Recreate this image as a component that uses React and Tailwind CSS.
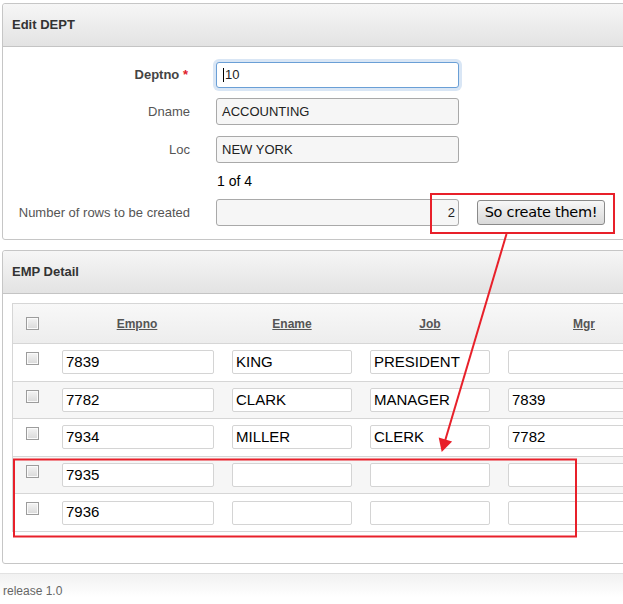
import React from "react";

const rows = [
  { empno: "7839", ename: "KING", job: "PRESIDENT", mgr: "" },
  { empno: "7782", ename: "CLARK", job: "MANAGER", mgr: "7839" },
  { empno: "7934", ename: "MILLER", job: "CLERK", mgr: "7782" },
  { empno: "7935", ename: "", job: "", mgr: "" },
  { empno: "7936", ename: "", job: "", mgr: "" },
];

const Checkbox = () => (
  <span className="block w-[13px] h-[13px] border border-[#9c9c9c] bg-gradient-to-b from-[#f4f4f4] to-[#d9d9d9] shadow-[inset_0_0_0_1px_#fafafa]" />
);

const PanelHeader = ({ children }) => (
  <div className="h-[43px] flex items-center px-[9px] bg-gradient-to-b from-[#f6f6f6] to-[#e3e3e3] border-b border-[#c4c4c4] text-[13px] font-bold text-[#333] rounded-t-[3px]">
    {children}
  </div>
);

const FormRow = ({ label, required, className = "", children }) => (
  <div className={`flex items-center ${className}`}>
    <div className="w-[187px] text-right text-[13px] text-[#555]">
      {required ? (
        <span className="font-bold text-[#444] pr-[2px]">
          {label} <span className="text-[#e0202a]">*</span>
        </span>
      ) : (
        label
      )}
    </div>
    <div className="ml-[26px] flex items-center">{children}</div>
  </div>
);

const ReadField = ({ value, right }) => (
  <div
    className={`w-[243px] h-[27px] flex items-center px-[5px] bg-[#f6f6f6] border border-[#a9a9a9] rounded-[3px] text-[13px] text-[#222] ${
      right ? "justify-end pr-[3px]" : ""
    }`}
  >
    {value}
  </div>
);

const Cell = ({ value }) => (
  <div className="h-[24px] flex items-center px-[3px] bg-white border border-[#d4d4d4] rounded-[2px] text-[15px] text-black">
    {value}
  </div>
);

export default function App() {
  return (
    <div className="relative w-[623px] h-[604px] overflow-hidden bg-white font-['Liberation_Sans',Arial,sans-serif]">
      <div className="pt-[3px] pl-[2px]">
        {/* Edit DEPT */}
        <section className="w-[680px] border border-[#c6c6c6] rounded-[3px]">
          <PanelHeader>Edit DEPT</PanelHeader>
          <div className="pt-[15px] pb-[13px] flex flex-col gap-[10px]">
            <FormRow label="Deptno" required>
              <div className="w-[243px] h-[26px] flex items-center px-[6px] bg-white border border-[#6a9fd6] rounded-[3px] shadow-[0_0_0_3px_#d9e6f5] text-[13px] text-[#222]">
                <span className="w-px h-[14px] bg-black mr-px" />
                10
              </div>
            </FormRow>
            <FormRow label="Dname">
              <ReadField value="ACCOUNTING" />
            </FormRow>
            <FormRow label="Loc" className="mt-px">
              <ReadField value="NEW YORK" />
            </FormRow>
            <div className="h-[16px] flex items-center pl-[214px] text-[14px] text-black">
              1 of 4
            </div>
            <FormRow label="Number of rows to be created">
              <ReadField value="2" right />
              <button className="ml-[18px] w-[128px] h-[25px] flex items-center justify-center bg-gradient-to-b from-[#f7f7f7] to-[#d9d9d9] border border-[#8a8a8a] rounded-[3px] text-[14.5px] text-black font-['DejaVu_Sans',sans-serif] tracking-[-0.3px]">
                So create them!
              </button>
            </FormRow>
          </div>
        </section>

        {/* EMP Detail */}
        <section className="mt-[10px] w-[680px] border border-[#c6c6c6] rounded-[3px]">
          <PanelHeader>EMP Detail</PanelHeader>
          <div className="pt-[9px] pl-[9px] pb-[31px]">
            <div className="border-l border-t border-b border-[#d6d6d6]">
              <div className="h-[39px] flex items-center bg-gradient-to-b from-[#f8f8f8] to-[#ededed] text-[12px] font-bold text-[#555]">
                <div className="w-[38px] pl-[13px]">
                  <Checkbox />
                </div>
                <div className="w-[172px] text-center underline">Empno</div>
                <div className="w-[138px] text-center underline">Ename</div>
                <div className="w-[138px] text-center underline">Job</div>
                <div className="w-[170px] text-center underline">Mgr</div>
              </div>
              {rows.map((r, i) => (
                <div
                  key={r.empno}
                  className={`h-[37.6px] flex items-center border-t border-[#d6d6d6] ${
                    i % 2 === 1 ? "bg-[#f6f6f6]" : "bg-white"
                  }`}
                >
                  <div className="w-[38px] pl-[13px] self-start pt-[8px]">
                    <Checkbox />
                  </div>
                  <div className="w-[172px] pl-[11px] pr-[9px]">
                    <Cell value={r.empno} />
                  </div>
                  <div className="w-[138px] px-[9px]">
                    <Cell value={r.ename} />
                  </div>
                  <div className="w-[138px] px-[9px]">
                    <Cell value={r.job} />
                  </div>
                  <div className="w-[170px] pl-[9px]">
                    <Cell value={r.mgr} />
                  </div>
                </div>
              ))}
            </div>
          </div>
        </section>
      </div>

      <div className="mt-[9px] h-[40px] border-t border-[#e2e2e2] bg-gradient-to-b from-[#f1f1f1] to-white to-60% pt-[8px] pl-[3px] text-[12px] text-[#666]">
        release 1.0
      </div>

      {/* annotation overlay */}
      <svg
        className="absolute left-0 top-0 pointer-events-none"
        width="623"
        height="604"
        viewBox="0 0 623 604"
      >
        <rect x="431" y="194" width="183" height="39" fill="none" stroke="#e8202a" strokeWidth="2" />
        <rect x="14" y="459.5" width="562" height="77" fill="none" stroke="#e8202a" strokeWidth="2" />
        <line x1="506.5" y1="234" x2="445" y2="441" stroke="#e8202a" strokeWidth="2" />
        <polygon points="441.7,452 452.1,441.5 438.7,437.5" fill="#e8202a" />
      </svg>
    </div>
  );
}
